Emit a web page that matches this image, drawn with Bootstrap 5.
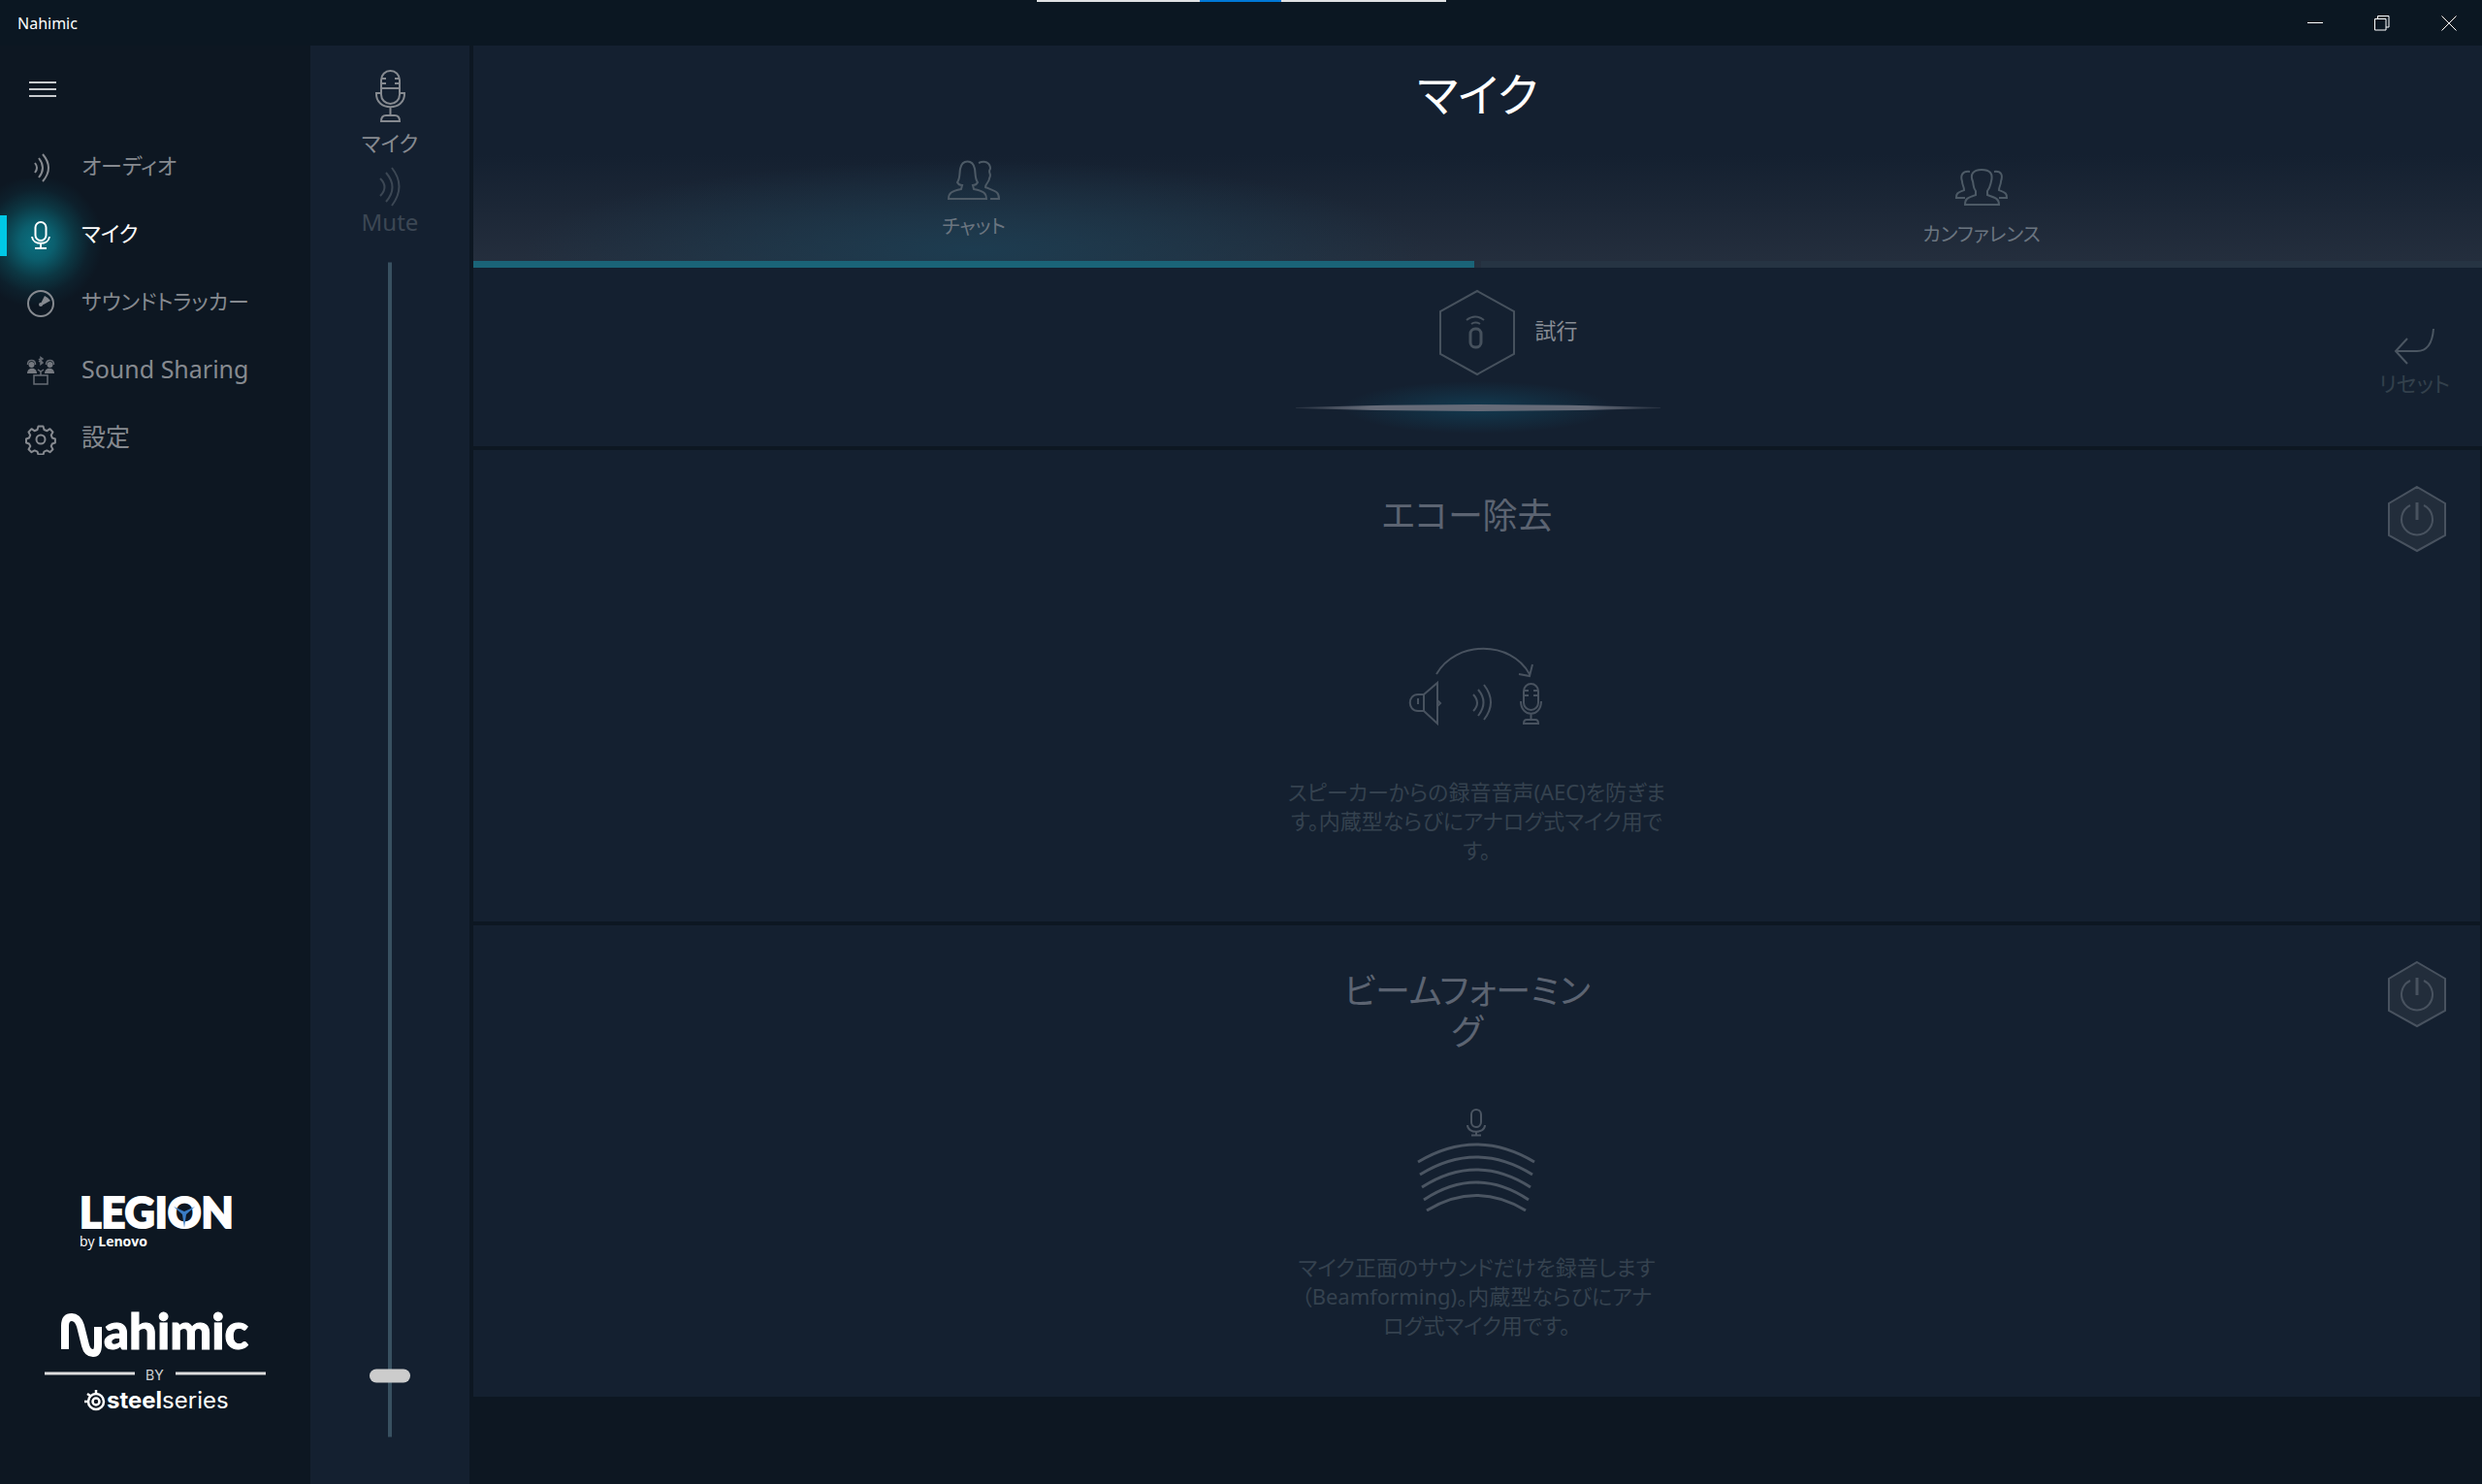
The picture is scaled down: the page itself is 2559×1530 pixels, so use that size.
<!DOCTYPE html>
<html lang="ja">
<head>
<meta charset="utf-8">
<meta name="viewport" content="width=device-width, initial-scale=1">
<title>Nahimic</title>
<link rel="stylesheet" href="https://cdn.jsdelivr.net/npm/bootstrap@5.3.0/dist/css/bootstrap.min.css">
<script src="https://cdn.jsdelivr.net/npm/bootstrap@5.3.0/dist/js/bootstrap.bundle.min.js"></script>
<style>
body{background:#0d1722;color:#868a90;font-family:"Noto Sans","Noto Sans CJK JP",sans-serif;font-feature-settings:"palt";font-size:22px;line-height:30px;min-height:100vh}
svg{display:block;fill:none;stroke:currentColor;stroke-width:2}
button{background:none;border:0;padding:0;color:inherit;font-feature-settings:inherit}
.titlebar{height:47px;background:#0b1722;color:#fff;font-size:16px;padding-left:18px}
.win-btn{width:69px;height:47px}
.win-btn svg{stroke-width:1}
.snap-strip{position:absolute;top:0;left:50%;width:422px;height:2px;transform:translateX(-50%);background:linear-gradient(90deg,#e0e2e4 168px,#0078d7 168px 252px,#e0e2e4 252px)}
.sidebar{width:320px;flex:none}
.menu-btn{margin:31px 0 30px 28px;width:32px;height:30px;color:#c8cace}
.nav-row{position:relative;height:70px;color:#868a90;text-decoration:none;gap:26px;padding-left:26px}
.nav-row svg,.nav-row span{position:relative;z-index:1}
.nav-row span{margin-top:-6px}
.nav-row .wide-label{font-size:25px}
.nav-row.on{color:#fff}
.nav-row.on::before{content:"";position:absolute;left:0;top:-24px;width:110px;height:130px;background:radial-gradient(circle at 38px 65px,#0a7282 0,#0b5f6e 18px,#0c3743 38px,#0d202c 54px,#0d172200 68px)}
.nav-row.on::after{content:"";position:absolute;left:0;top:14px;width:7px;height:42px;background:#00c8e6}
.level{width:164px;flex:none;background:#142030;padding:24px 0 49px}
.level label{line-height:30px;margin-top:5px}
.mute{color:#3c4754;font-size:24px;margin-top:8px}
.slider-box{container-type:size;position:relative;width:42px;margin-top:26px}
.slider-box input{appearance:none;-webkit-appearance:none;position:absolute;left:50%;top:50%;width:100cqh;height:42px;margin:0;background:none;transform:translate(-50%,-50%) rotate(-90deg)}
.slider-box input::-webkit-slider-runnable-track{height:4px;background:#385060}
.slider-box input::-webkit-slider-thumb{-webkit-appearance:none;width:14px;height:42px;border-radius:7px;background:#ccc;margin-top:-19px}
.main-pane{margin-left:4px;min-width:0}
.pane{background:#142030}
.page-title{font-size:47px;line-height:60px;color:#fff;padding-top:20px;height:113px;font-weight:400;margin:0}
.tab-strip{gap:7px;background:linear-gradient(#14203000,#252f3e)}
.tab-btn{flex:1 1 0;height:116px;font-size:20px;color:#6b7580;border-bottom:7px solid #263443;padding-bottom:12px}
.tab-btn.on{padding-bottom:20px;border-color:#1a6478;background:radial-gradient(ellipse 45% 85% at 50% 90%,#1d3c50 0,#1d3c5000 100%)}
.tab-btn svg{color:#4d5a66;margin-bottom:11px}
.try-row{height:184px}
.try-btn{color:#878c94;gap:19px;margin-top:22px}
.try-btn svg{margin-left:63px;color:#46515d}
.try-btn span{margin-top:-6px}
.reset-btn{position:absolute;right:33px;top:60px;color:#33404c}
.reset-btn svg{color:#4b5662}
.effect{height:486px;margin:4px 2px 0 0;position:relative}
.effect h2{font-size:36px;line-height:42px;color:#5c6472;margin:47px 0 0;height:84px;padding-right:20px;font-weight:400}
.effect p{margin:0;color:#35424f}
.power-btn{position:absolute;right:34px;top:36px;color:#48525f}
.aec-art{margin-top:71px;color:#48525f}
.aec-art + p{margin-top:51px}
.beam-art{margin-top:56px;padding-right:2px;color:#4b5562}
.beam-art + p{margin-top:42px}
.brand{padding:0 0 57px 40px}
.brand text{fill:#fff}
</style>
</head>
<body class="d-flex flex-column">
<header class="titlebar d-flex align-items-center">
  <span class="me-auto">Nahimic</span>
  <i class="snap-strip"></i>
  <button class="win-btn" aria-label="最小化"><svg class="mx-auto" width="16" height="16"><path d="M0 7.500h16"/></svg></button>
  <button class="win-btn" aria-label="元に戻す"><svg class="mx-auto" width="16" height="16"><path d="M.5 3.500h11.500v11.500H.5zM3.500 3.500v-3h11.500v11.500h-3"/></svg></button>
  <button class="win-btn" aria-label="閉じる"><svg class="mx-auto" width="16" height="16"><path d="M.5.5l15 15M15.500.5l-15 15"/></svg></button>
</header>

<div class="d-flex flex-grow-1">
  <nav class="sidebar d-flex flex-column">
    <button class="menu-btn" aria-label="メニュー"><svg width="32" height="30"><path d="M2 7h28M2 14h28M2 21h28"/></svg></button>
    <a class="nav-row d-flex align-items-center" href="#"><svg width="32" height="32"><path d="M10 11q4 5 0 10M14 6q8 10 0 20M18 2q12 14 0 28"/></svg><span>オーディオ</span></a>
    <a class="nav-row on d-flex align-items-center" href="#"><svg width="32" height="32"><rect x="10.500" y="2" width="11" height="19" rx="5.500"/><path d="M7 17c1 9 17 9 18 0M16 24v5M10 29h12"/></svg><span>マイク</span></a>
    <a class="nav-row d-flex align-items-center" href="#"><svg width="32" height="32"><circle cx="16" cy="16" r="13"/><path d="M16 16l4-8q4 2 6 5l-9 5z" fill="currentColor" stroke="none"/><circle cx="16" cy="17" r="2" fill="currentColor" stroke="none"/></svg><span>サウンドトラッカー</span></a>
    <a class="nav-row d-flex align-items-center" href="#"><svg width="32" height="32"><g fill="currentColor" stroke="none" opacity=".85"><circle cx="6.500" cy="9" r="3"/><path d="M2 18c0-7 10-7 10 0z"/><circle cx="25.500" cy="9" r="3"/><path d="M20 18c0-7 10-7 10 0z"/></g><path stroke-width="1.500" opacity=".75" d="M2.500 9c0-6 8-6 8 0M21.500 9c0-6 8-6 8 0M13 14l3 2 3-2M16 16v4M9 20h14v9H9zM14 3l4 4-2 1.500V1.500l2 1.500-4 3"/></svg><span class="wide-label">Sound Sharing</span></a>
    <a class="nav-row d-flex align-items-center" href="#"><svg width="32" height="32"><circle cx="16" cy="16" r="4.500"/><path d="M13.500 2.500h5l1 3.500 3 1.200 3-2 3 3.300-1.800 3.200 1.200 2.800 3 1v4l-3 1-1.200 2.500 1.800 3.200-3 3-3.200-1.800-2.800 1.200-1 3h-5l-1-3-2.800-1.200-3.200 1.800-3-3 1.800-3.200L4 20.500l-3-1v-4l3-1 1.200-2.800L3.500 8.500l3-3.300 3 2 3-1.200z" stroke-linejoin="round"/></svg><span class="wide-label">設定</span></a>

    <div class="brand mt-auto">
    <svg width="254" height="262" viewBox="40 1210 254 262" role="img" aria-label="Legion by Lenovo, Nahimic by SteelSeries">
      <g stroke="none">
        <text x="82" y="1265" font-family="Lato" font-weight="900" font-size="43" style="stroke:#fff;stroke-width:2">LEGION</text>
        <text x="82" y="1284" font-family="Open Sans" font-size="14">by <tspan font-weight="700">Lenovo</tspan></text>
        <text x="107" y="1390" font-family="Lato" font-weight="900" font-size="51" style="stroke:#fff;stroke-width:1">ahimic</text>
        <text x="150" y="1422" font-family="Inter" font-size="14" opacity=".8">BY</text>
        <text x="110" y="1451" font-family="Inter" font-size="24"><tspan font-weight="700">steel</tspan>series</text>
      </g>
      <path d="M179 1243l11 5 11-5-9 8-2 14-2-14z" fill="#3a7cc4" stroke="none"/>
      <path d="M67 1390v-24q0-9 7-9 6 0 9 9l5 20q2 8 8 8 5 0 5-9v-18" stroke="#fff" stroke-width="8"/>
      <path d="M46 1415h93M181 1415h93" stroke="#ddd" stroke-width="3"/>
      <g stroke="#fff" stroke-width="2.500"><circle cx="99" cy="1444" r="8"/><circle cx="99" cy="1444" r="3.500"/><path d="M87 1444h4M90 1436l3 2M99 1432v4"/></g>
    </svg>
    </div>
  </nav>

  <section class="level d-flex flex-column align-items-center">
    <svg width="34" height="56" viewBox="0 0 34 56"><rect x="8" y="2" width="19" height="34" rx="9.500"/><path d="M8 20h19M8 10h5M8 15h5M27 10h-5M27 15h-5M8 25H3c-1 19 30 19 29 0h-5M17.500 39v9M8 54q0-6 5-6h9q5 0 5 6z"/></svg>
    <label for="mic">マイク</label>
    <button class="mute d-flex flex-column align-items-center"><svg width="24" height="44"><path d="M2 14q9 9 0 18M8 8q13 15 0 30M14 3q15 19 0 39"/></svg>Mute</button>
    <div class="slider-box flex-grow-1"><input id="mic" type="range" min="0" max="100" step="0.1" value="4.7"></div>
  </section>

  <main class="main-pane flex-grow-1">
    <div class="pane">
      <h1 class="page-title text-center">マイク</h1>
      <div class="tab-strip d-flex" role="tablist">
        <button class="tab-btn on d-flex flex-column align-items-center justify-content-end" role="tab"><svg width="56" height="44"><path d="M15 31C5 33 2 35 2 41h39c0-6-3-8-13-10l-1-4c2 0 4-1 5-3-3-4-2-8-3-14-2-10-13-10-15 0-1 6 0 10-3 14 1 2 3 3 5 3zM33 4c7-3 12 0 12 6-3 4 2 5-1 10 0 4-4 5-4 9 8 4 14 3 14 12H45"/></svg>チャット</button>
        <button class="tab-btn d-flex flex-column align-items-center justify-content-end" role="tab"><svg width="56" height="42"><path d="M22 27c-9 3-11 4-11 10h35c0-6-3-7-12-10v-4c3-4 3-6 4-10 2-8-1-12-10-12s-12 5-9 12c1 4 0 6 3 10zM16 3c-8-1-10 4-8 10 0 4 2 5 2 9-7 3-8 3-8 8h9M41 3c8-1 9 4 7 10 0 4-2 5-2 9 7 3 8 3 8 8h-8"/></svg>カンファレンス</button>
      </div>
      <div class="try-row position-relative d-flex flex-column align-items-center">
        <button class="try-btn d-flex align-items-center"><svg width="80" height="90" viewBox="0 0 80 90"><path d="M40 2l38 21v44L40 88 2 67V23z"/><rect x="33" y="41" width="11" height="19" rx="5" stroke-width="3"/><path d="M29 32q9-7 18 0M34 36q4-3 9 0"/></svg><span>試行</span></button>
        <svg width="376" height="56" viewBox="0 0 376 56" style="margin-top:4px"><defs><radialGradient id="halo"><stop offset="0" stop-color="#123a50"/><stop offset="1" stop-color="#123a50" stop-opacity="0"/></radialGradient><linearGradient id="beam"><stop offset="0" stop-color="#656b78" stop-opacity=".2"/><stop offset=".2" stop-color="#656b78"/><stop offset=".8" stop-color="#656b78"/><stop offset="1" stop-color="#656b78" stop-opacity=".2"/></linearGradient></defs><ellipse cx="188" cy="28" rx="140" ry="27" fill="url(#halo)" stroke="none"/><path d="M0 28q188-6 376 0v1q-188 6-376 0z" fill="url(#beam)" stroke="none"/></svg>
        <button class="reset-btn"><svg class="mx-auto mb-1" width="44" height="40"><path d="M15 13L3 26l12 13M3 26h22c12 0 16-10 17-23"/></svg>リセット</button>
      </div>
    </div>

    <section class="pane effect d-flex flex-column align-items-center text-center">
      <button class="power-btn" aria-label="エコー除去"><svg width="62" height="70"><path d="M31 2l29 17v33L31 68 2 52V19z" fill="#222d3b"/><path d="M24 21a16 16 0 1 0 14 0"/><path d="M31 18v18" stroke-width="3"/></svg></button>
      <h2>エコー除去</h2>
      <svg class="aec-art" width="144" height="84" viewBox="0 0 144 84"><path d="M30 29C50-6 107-6 126 29M115 29l11 2 3-12M17 50h-6c-11 0-11 17 0 17h6zM17 50l14-12v42L17 67M31 56l3 3-3 3M11 54v6M68 50q8 9 0 17M73 45q11 13 0 27M79 40q14 18 0 36"/><rect x="120" y="39" width="15" height="27" rx="7.500"/><path d="M120 46h5M120 51h5M135 46h-5M135 51h-5M117 57c0 17 21 17 21 0M127.500 70v6M120 80q0-4 3-4h9q3 0 3 4z"/></svg>
      <p>スピーカーからの録音音声(AEC)を防ぎま<br>す。内蔵型ならびにアナログ式マイク用で<br>す。</p>
    </section>

    <section class="pane effect d-flex flex-column align-items-center text-center">
      <button class="power-btn" aria-label="ビームフォーミング"><svg width="62" height="70"><path d="M31 2l29 17v33L31 68 2 52V19z" fill="#222d3b"/><path d="M24 21a16 16 0 1 0 14 0"/><path d="M31 18v18" stroke-width="3"/></svg></button>
      <h2>ビームフォーミン<br>グ</h2>
      <svg class="beam-art" width="126" height="108" viewBox="0 0 124 108"><rect x="57" y="3" width="10" height="18" rx="5"/><path d="M53 19c0 9 18 9 18 0M62 26v4M57 29.500h10"/><path stroke-width="3" d="M2 57q60-36 120 0M4 70q58-36 116 0M6 83q56-36 112 0M8 96q54-36 108 0M11 107q51-31 102 0"/></svg>
      <p>マイク正面のサウンドだけを録音します<br>（Beamforming)。内蔵型ならびにアナ<br>ログ式マイク用です。</p>
    </section>
  </main>
</div>
</body>
</html>
